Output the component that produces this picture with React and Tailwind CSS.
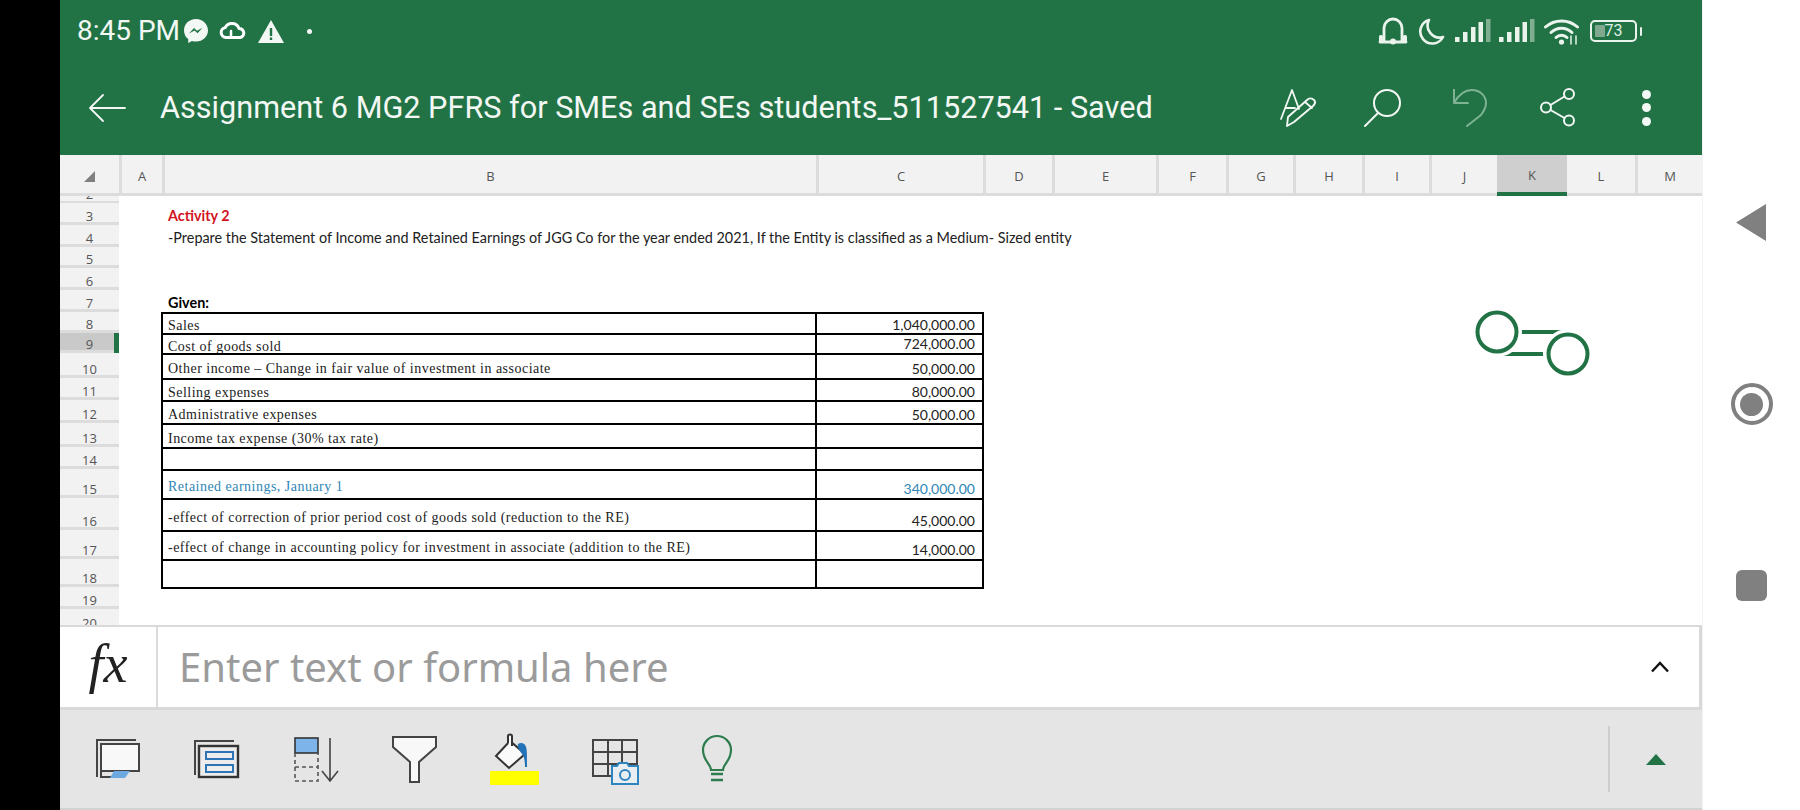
const cols = [
  { l: '', w: 'w-[59px]' }, { l: 'A', w: 'w-[43px]' }, { l: 'B', w: 'w-[654px]' }, { l: 'C', w: 'w-[167px]' },
  { l: 'D', w: 'w-[69px]' }, { l: 'E', w: 'w-[104px]' }, { l: 'F', w: 'w-[70px]' }, { l: 'G', w: 'w-[67px]' },
  { l: 'H', w: 'w-[69px]' }, { l: 'I', w: 'w-[67px]' }, { l: 'J', w: 'w-[68px]' }, { l: 'K', w: 'w-[70px]' },
  { l: 'L', w: 'w-[68px]' }, { l: 'M', w: 'w-[67px]' },
];

const rows = [
  { n: 3, h: 'h-[22px]', a: 'Activity 2', cls: 'font-bold text-[#d2141e]' },
  { n: 4, h: 'h-[22px]', a: '-Prepare the Statement of Income and Retained Earnings of JGG Co for the year ended 2021, If the Entity is classified as a Medium- Sized entity' },
  { n: 5, h: 'h-[21px]' },
  { n: 6, h: 'h-[22px]' },
  { n: 7, h: 'h-[22px]', a: 'Given:', cls: 'font-bold text-black' },
  { n: 8, h: 'h-[21px]', t: 'Sales', v: '1,040,000.00', tp: 'pb-0', vp: 'pb-0' },
  { n: 9, h: 'h-[20px]', t: 'Cost of goods sold', v: '724,000.00', tp: '-mb-[1px]', vp: 'pb-[1px]', sel: true },
  { n: 10, h: 'h-[25px]', t: 'Other income – Change in fair value of investment in associate', v: '50,000.00', tp: 'pb-[2px]', vp: 'pb-[1px]' },
  { n: 11, h: 'h-[22px]', t: 'Selling expenses', v: '80,000.00', tp: 'pb-0', vp: 'pb-0' },
  { n: 12, h: 'h-[23px]', t: 'Administrative expenses', v: '50,000.00', tp: 'pb-[1px]', vp: 'pb-0' },
  { n: 13, h: 'h-[24px]', t: 'Income tax expense (30% tax rate)', tp: 'pb-[1px]' },
  { n: 14, h: 'h-[22px]', t: '' },
  { n: 15, h: 'h-[29px]', t: 'Retained earnings, January 1', v: '340,000.00', blue: true, tp: 'pb-[4px]', vp: 'pb-[1px]' },
  { n: 16, h: 'h-[32px]', t: '-effect of correction of prior period cost of goods sold (reduction to the RE)', v: '45,000.00', tp: 'pb-[5px]', vp: 'pb-[1px]' },
  { n: 17, h: 'h-[29px]', t: '-effect of change in accounting policy for investment in associate (addition to the RE)', v: '14,000.00', tp: 'pb-[4px]', vp: 'pb-[1px]' },
  { n: 18, h: 'h-[28px]', t: '', last: true },
  { n: 19, h: 'h-[22px]' },
];

const sheetFont = "font-['Lato','Liberation_Sans',sans-serif]";
const headFont = "font-['Open_Sans','Liberation_Sans',sans-serif]";

function Row({ r }) {
  const inTable = r.t !== undefined;
  return (
    <div className={`flex shrink-0 ${r.h}`}>
      <div className={`w-[59px] shrink-0 flex items-end justify-center border-b-[3px] border-[#dcdcdc] text-[13px] leading-[16px] text-[#555] relative ${headFont} ${r.sel ? 'bg-[#c9c9c9]' : 'bg-[#f2f2f2]'}`}>
        <span className="-mb-[2px]">{r.n}</span>
        {r.sel && <span className="absolute right-0 top-0 bottom-[-3px] w-[5px] bg-[#217346]" />}
      </div>
      <div className="w-[42px] shrink-0" />
      {inTable ? (
        <div className={`flex border-t-2 border-x-2 border-black ${r.last ? 'border-b-2 h-[30px]' : ''}`}>
          <div className={`w-[654px] flex items-end pl-[5px] border-r-2 border-black font-['Liberation_Serif',serif] text-[14px] leading-[15px] tracking-[0.48px] whitespace-nowrap ${r.blue ? 'text-[#2f86b5]' : 'text-[#222]'}`}>
            <span className={r.tp}>{r.t}</span>
          </div>
          <div className={`w-[165px] flex items-end justify-end pr-[7px] text-[14px] leading-[16px] ${sheetFont} ${r.blue ? 'text-[#2f86b5]' : 'text-[#222]'}`}>
            <span className={r.vp}>{r.v}</span>
          </div>
        </div>
      ) : (
        <div className={`flex items-end pl-[7px] pb-[1px] text-[14.4px] leading-[16px] whitespace-nowrap text-[#222] ${sheetFont} ${r.cls || ''}`}>{r.a}</div>
      )}
    </div>
  );
}

const W = { fill: 'none', stroke: '#fff', strokeLinecap: 'round', strokeLinejoin: 'round' };

function StatusLeft() {
  return (
    <div className="flex items-center">
      <span className="text-[28px] leading-none text-[#f3f8f4] font-['Roboto',sans-serif] w-[103px] whitespace-nowrap">8:45 PM</span>
      <svg width="26" height="26" viewBox="0 0 26 26" className="ml-[3px]">
        <path d="M13 1C6 1 1 6 1 12.5c0 3.6 1.6 6.6 4.2 8.6V25l3.8-2.1c1.3.4 2.6.6 4 .6 7 0 12-5 12-11S20 1 13 1z" fill="#f3f8f4" />
        <path d="M6 15.5l5-5.5 3 2.7 5.5-3-5 5.5-3-2.7z" fill="#217346" />
      </svg>
      <svg width="28" height="18" viewBox="0 0 28 18" className="ml-[10px]">
        <path d="M7 15.5a5 5 0 0 1-.8-9.9A7.5 7.5 0 0 1 20 6.5a4.6 4.6 0 0 1 1.5 9z" {...W} strokeWidth="3" />
        <path d="M12 15.5V9" {...W} strokeWidth="2.5" />
      </svg>
      <svg width="26" height="23" viewBox="0 0 26 23" className="ml-[11px]">
        <path d="M13 0L26 23H0z" fill="#f3f8f4" />
        <path d="M11.8 8h2.4v8h-2.4zM11.8 17.5h2.4v2.5h-2.4z" fill="#217346" />
      </svg>
      <span className="ml-[23px] w-[5px] h-[5px] rounded-full bg-[#f3f8f4]" />
    </div>
  );
}

function Signal() {
  return (
    <svg width="36" height="24" viewBox="0 0 36 24">
      <rect x="0" y="18" width="4.5" height="5" fill="#eaf4ec" />
      <rect x="8" y="13" width="4.5" height="10" fill="#eaf4ec" />
      <rect x="16" y="8" width="4.5" height="15" fill="#eaf4ec" />
      <rect x="23.5" y="3" width="4.5" height="20" fill="#eaf4ec" />
      <rect x="31" y="0" width="4.5" height="23" fill="#7fae91" />
    </svg>
  );
}

function StatusRight() {
  return (
    <div className="flex items-center ml-auto mr-[60px]">
      <svg width="30" height="28" viewBox="0 0 30 28">
        <path d="M6 24V11a9 9 0 0 1 18 0v13" {...W} strokeWidth="2.8" stroke="#eaf4ec" />
        <path d="M2 25h26" {...W} strokeWidth="2.8" stroke="#eaf4ec" />
        <circle cx="15" cy="24.5" r="3" fill="#eaf4ec" />
        <rect x="1" y="18" width="4" height="8" rx="1.5" fill="#eaf4ec" />
        <rect x="25" y="18" width="4" height="8" rx="1.5" fill="#eaf4ec" />
      </svg>
      <svg width="27" height="27" viewBox="0 0 27 27" className="ml-[10px]">
        <path d="M11 2A12 12 0 1 0 25 19 A12 12 0 0 1 11 2z" {...W} strokeWidth="2.6" stroke="#eaf4ec" />
      </svg>
      <div className="ml-[10px]"><Signal /></div>
      <div className="ml-[8px]"><Signal /></div>
      <svg width="36" height="27" viewBox="0 0 36 27" className="ml-[9px]">
        <path d="M1.5 9a24 24 0 0 1 32 0" {...W} strokeWidth="3" stroke="#eaf4ec" />
        <path d="M7 14.5a15 15 0 0 1 21 0" {...W} strokeWidth="3" stroke="#eaf4ec" />
        <path d="M12 19.5a8 8 0 0 1 11 0" {...W} strokeWidth="3" stroke="#eaf4ec" />
        <circle cx="17.5" cy="24" r="2.6" fill="#eaf4ec" />
        <path d="M27 18v8M32 18v8" {...W} strokeWidth="1.6" stroke="#dcebe0" />
      </svg>
      <div className="ml-[10px] relative w-[47px] h-[22px] rounded-[5px] border-2 border-[#eaf4ec] flex items-center justify-center overflow-hidden">
        <span className="absolute left-[3px] top-[3px] bottom-[3px] w-[10px] bg-[#7fa88e] rounded-[1px]" />
        <span className="relative text-[16px] leading-none text-[#dfeee4] font-['Roboto',sans-serif]">73</span>
      </div>
      <span className="ml-[3px] w-[2px] h-[9px] rounded-sm bg-[#eaf4ec]" />
    </div>
  );
}

function TitleRow() {
  return (
    <div className="h-[95px] flex items-center">
      <svg width="38" height="30" viewBox="0 0 38 30" className="ml-[28px]">
        <path d="M15 2L2 15l13 13M2 15h35" {...W} strokeWidth="1.8" stroke="#f3f8f4" />
      </svg>
      <span className="ml-[34px] mt-[2px] text-[30.65px] leading-none text-[#f3f8f4] font-['Roboto',sans-serif] whitespace-nowrap">Assignment 6 MG2 PFRS for SMEs and SEs students_511527541 - Saved</span>
      <div className="ml-auto flex items-center mr-[51px]">
        <svg width="36" height="38" viewBox="0 0 36 38">
          <path d="M1 30L12 1l7 19M6 19h9" {...W} strokeWidth="1.8" stroke="#f3f8f4" />
          <path d="M8 28L27 11c2-2 5-2 7 0s1 4-1 6L14 33l-7 4z" {...W} strokeWidth="1.9" stroke="#f3f8f4" />
          <path d="M25 13l7 6" {...W} strokeWidth="1.8" stroke="#f3f8f4" />
        </svg>
        <svg width="38" height="38" viewBox="0 0 38 38" className="ml-[48px]">
          <circle cx="23" cy="14" r="13" {...W} strokeWidth="2" stroke="#f3f8f4" />
          <path d="M14 24L1 37" {...W} strokeWidth="2" stroke="#f3f8f4" />
        </svg>
        <svg width="36" height="38" viewBox="0 0 36 38" className="ml-[51px]">
          <path d="M1 0v14h14M1 14C6 5 12 1 19 1c8 0 14 6 14 13 0 5-2 8-5 12L14 37" {...W} strokeWidth="2" stroke="#7fb394" />
        </svg>
        <svg width="36" height="39" viewBox="0 0 36 39" className="ml-[51px]">
          <g {...W} strokeWidth="2" stroke="#f3f8f4">
            <circle cx="6" cy="19.5" r="5" /><circle cx="29" cy="6" r="5" /><circle cx="29" cy="32.5" r="5" />
            <path d="M10.5 17L24.5 8.5M10.5 22L24.5 30" />
          </g>
        </svg>
        <div className="ml-[66px] flex flex-col gap-[4.5px] w-[9px]">
          <span className="w-[9px] h-[9px] rounded-full bg-[#f3f8f4]" />
          <span className="w-[9px] h-[9px] rounded-full bg-[#f3f8f4]" />
          <span className="w-[9px] h-[9px] rounded-full bg-[#f3f8f4]" />
        </div>
      </div>
    </div>
  );
}

function ColHeader() {
  return (
    <div className="h-[41px] flex shrink-0 bg-[#f2f2f2]">
      {cols.map((c, i) => (
        <div key={i} className={`${c.w} shrink-0 relative flex items-center justify-center pt-[5px] text-[13px] text-[#555] border-b-[3px] ${headFont} ${c.l === 'K' ? 'bg-[#cfcfcf] border-[#217346] border-b-[4px]' : 'border-[#dcdcdc]'} ${i > 0 && c.l !== 'K' && c.l !== 'L' ? 'border-l-[3px] border-l-[#dcdcdc]' : ''}`}>
          {i === 0 ? (
            <svg width="12" height="12" viewBox="0 0 12 12"><path d="M11 0v11H0z" fill="#808080" /></svg>
          ) : c.l}
        </div>
      ))}
    </div>
  );
}

function Sheet() {
  return (
    <div className="relative flex-1 min-h-0 flex flex-col overflow-hidden bg-white">
      <div className={`w-[59px] h-[7px] shrink-0 bg-[#f2f2f2] border-b-[2px] border-[#dcdcdc] flex items-end justify-center overflow-hidden text-[13px] leading-[16px] text-[#555] ${headFont}`}>
        <span className="-mb-[1px]">2</span>
      </div>
      {rows.map((r) => <Row key={r.n} r={r} />)}
      <div className={`w-[59px] flex-1 shrink-0 bg-[#f2f2f2] flex items-start justify-center text-[13px] leading-[16px] text-[#555] ${headFont}`}>
        <span className="mt-[6px]">20</span>
      </div>
      <svg width="120" height="70" viewBox="0 0 120 70" className="absolute left-[1413px] top-[112px]">
        <path d="M47 24h50" fill="none" stroke="#217346" strokeWidth="4" />
        <path d="M27 46h43" fill="none" stroke="#217346" strokeWidth="4" />
        <g fill="none">
          <circle cx="24" cy="24" r="21" stroke="#fff" strokeWidth="8" />
          <circle cx="95" cy="46" r="21" stroke="#fff" strokeWidth="8" />
          <circle cx="24" cy="24" r="19.5" stroke="#217346" strokeWidth="4" />
          <circle cx="95" cy="46" r="19.5" stroke="#217346" strokeWidth="4" />
        </g>
      </svg>
    </div>
  );
}

function FormulaBar() {
  return (
    <div className="h-[85px] shrink-0 flex items-center bg-white border-t-[2px] border-b-[3px] border-r-[3px] border-[#d9d9d9]">
      <div className="w-[98px] h-full flex items-center justify-center border-r-[2px] border-[#dcdcdc]">
        <span className="font-['Liberation_Serif',serif] italic text-[54px] leading-none text-[#222] -mt-[6px]">fx</span>
      </div>
      <span className="ml-[21px] text-[40px] leading-none text-[#9b9b9b] font-['Noto_Sans',sans-serif] whitespace-nowrap">Enter text or formula here</span>
      <svg width="20" height="12" viewBox="0 0 20 12" className="ml-auto mr-[29px]">
        <path d="M2 10.5L10 2l8 8.5" fill="none" stroke="#111" strokeWidth="2.4" />
      </svg>
    </div>
  );
}

function T({ ml, children }) {
  return <svg width="50" height="56" viewBox="0 0 50 56" className={`shrink-0 ${ml}`}>{children}</svg>;
}

function Toolbar() {
  const s = { stroke: '#444', strokeWidth: 2, fill: 'none' };
  return (
    <div className="h-[100px] shrink-0 flex items-center bg-[#e5e5e5] border-b-[2px] border-[#d2d2d2]">
      <T ml="ml-[33px]">
        <path d="M43 9H4v37" {...s} />
        <rect x="8" y="13" width="38" height="27" fill="#f8f8f8" stroke="#444" strokeWidth="2" />
        <path d="M8 40v6h11" {...s} />
        <path d="M21 40h16l-5 7H17z" fill="#6ba9e0" />
      </T>
      <T ml="ml-[48px]">
        <path d="M43 10H4v34" {...s} />
        <rect x="8" y="15" width="39" height="31" fill="#ececec" stroke="#333" strokeWidth="2.4" />
        <rect x="15" y="21" width="27" height="7" fill="#eee" stroke="#2e75b6" strokeWidth="2" />
        <rect x="15" y="34" width="27" height="7" fill="#eee" stroke="#2e75b6" strokeWidth="2" />
      </T>
      <T ml="ml-[50px]">
        <rect x="4" y="7" width="23" height="15" fill="#7db4ea" stroke="#333" strokeWidth="1.6" />
        <path d="M4 22v28h23V22M4 36h23" fill="none" stroke="#555" strokeWidth="1.6" strokeDasharray="4 3" />
        <path d="M39 7v43M31 40l8 10 8-10" fill="none" stroke="#444" strokeWidth="1.6" />
      </T>
      <T ml="ml-[49px]">
        <path d="M3 6h43v10L29 31v20h-9V31L3 16z" fill="#f8f8f8" stroke="#444" strokeWidth="2" />
      </T>
      <T ml="ml-[50px]">
        <path d="M6 25L20 10l15 13-16 14z" fill="#fafafa" stroke="#333" strokeWidth="2" />
        <path d="M18 12V5c0-2 4-2 4 0v10" fill="#fafafa" stroke="#333" strokeWidth="2" />
        <path d="M28 13c3-2 7-1 8 3 1 3 1 8 1 20h-2c0-7-1-11-3-13-2-3-5-6-4-10z" fill="#2272b8" />
        <rect x="-1" y="40" width="50" height="14" fill="#ffff00" />
      </T>
      <T ml="ml-[51px]">
        <path d="M2 9h44v36H2zM2 21h44M2 33h44M17 9v36M31 9v36" fill="none" stroke="#444" strokeWidth="2" />
        <path d="M21 35h5l2-3h8l2 3h9v18H21z" fill="#e8eef2" stroke="#2e86c1" strokeWidth="2" />
        <circle cx="34" cy="44" r="5" fill="none" stroke="#2e86c1" strokeWidth="2" />
      </T>
      <T ml="ml-[51px]">
        <path d="M19 39c0-6-8-9-8-20a14 14 0 0 1 28 0c0 11-8 14-8 20z" fill="none" stroke="#2e7d4f" strokeWidth="2.2" />
        <path d="M19 43h12M19 49h12" fill="none" stroke="#2e7d4f" strokeWidth="2.4" />
      </T>
      <div className="ml-auto flex items-center h-full">
        <span className="w-[2px] h-[66px] bg-[#cdcdcd]" />
        <svg width="20" height="11" viewBox="0 0 20 11" className="ml-[36px] mr-[36px]">
          <path d="M10 0l10 11H0z" fill="#217346" />
        </svg>
      </div>
    </div>
  );
}

export default function App() {
  return (
    <div className="w-[1800px] h-[810px] flex overflow-hidden bg-white">
      <div className="w-[60px] shrink-0 bg-black" />
      <div className="w-[1642px] shrink-0 flex flex-col">
        <div className="h-[155px] shrink-0 bg-[#217346]">
          <div className="h-[60px] flex items-center pl-[17px] pt-[2px]">
            <StatusLeft />
            <StatusRight />
          </div>
          <TitleRow />
        </div>
        <ColHeader />
        <Sheet />
        <FormulaBar />
        <Toolbar />
      </div>
      <div className="flex-1 flex flex-col items-center pt-[204px] bg-white border-l border-[#f2f2f2]">
        <svg width="30" height="37" viewBox="0 0 30 37" className="-ml-[2px]"><path d="M30 0v37L0 18.5z" fill="#808080" /></svg>
        <div className="mt-[142px] w-[42px] h-[42px] rounded-full border-[4px] border-[#808080] flex items-center justify-center">
          <span className="w-[23px] h-[23px] rounded-full bg-[#808080]" />
        </div>
        <div className="mt-[145px] w-[31px] h-[31px] rounded-[6px] bg-[#808080]" />
      </div>
    </div>
  );
}
